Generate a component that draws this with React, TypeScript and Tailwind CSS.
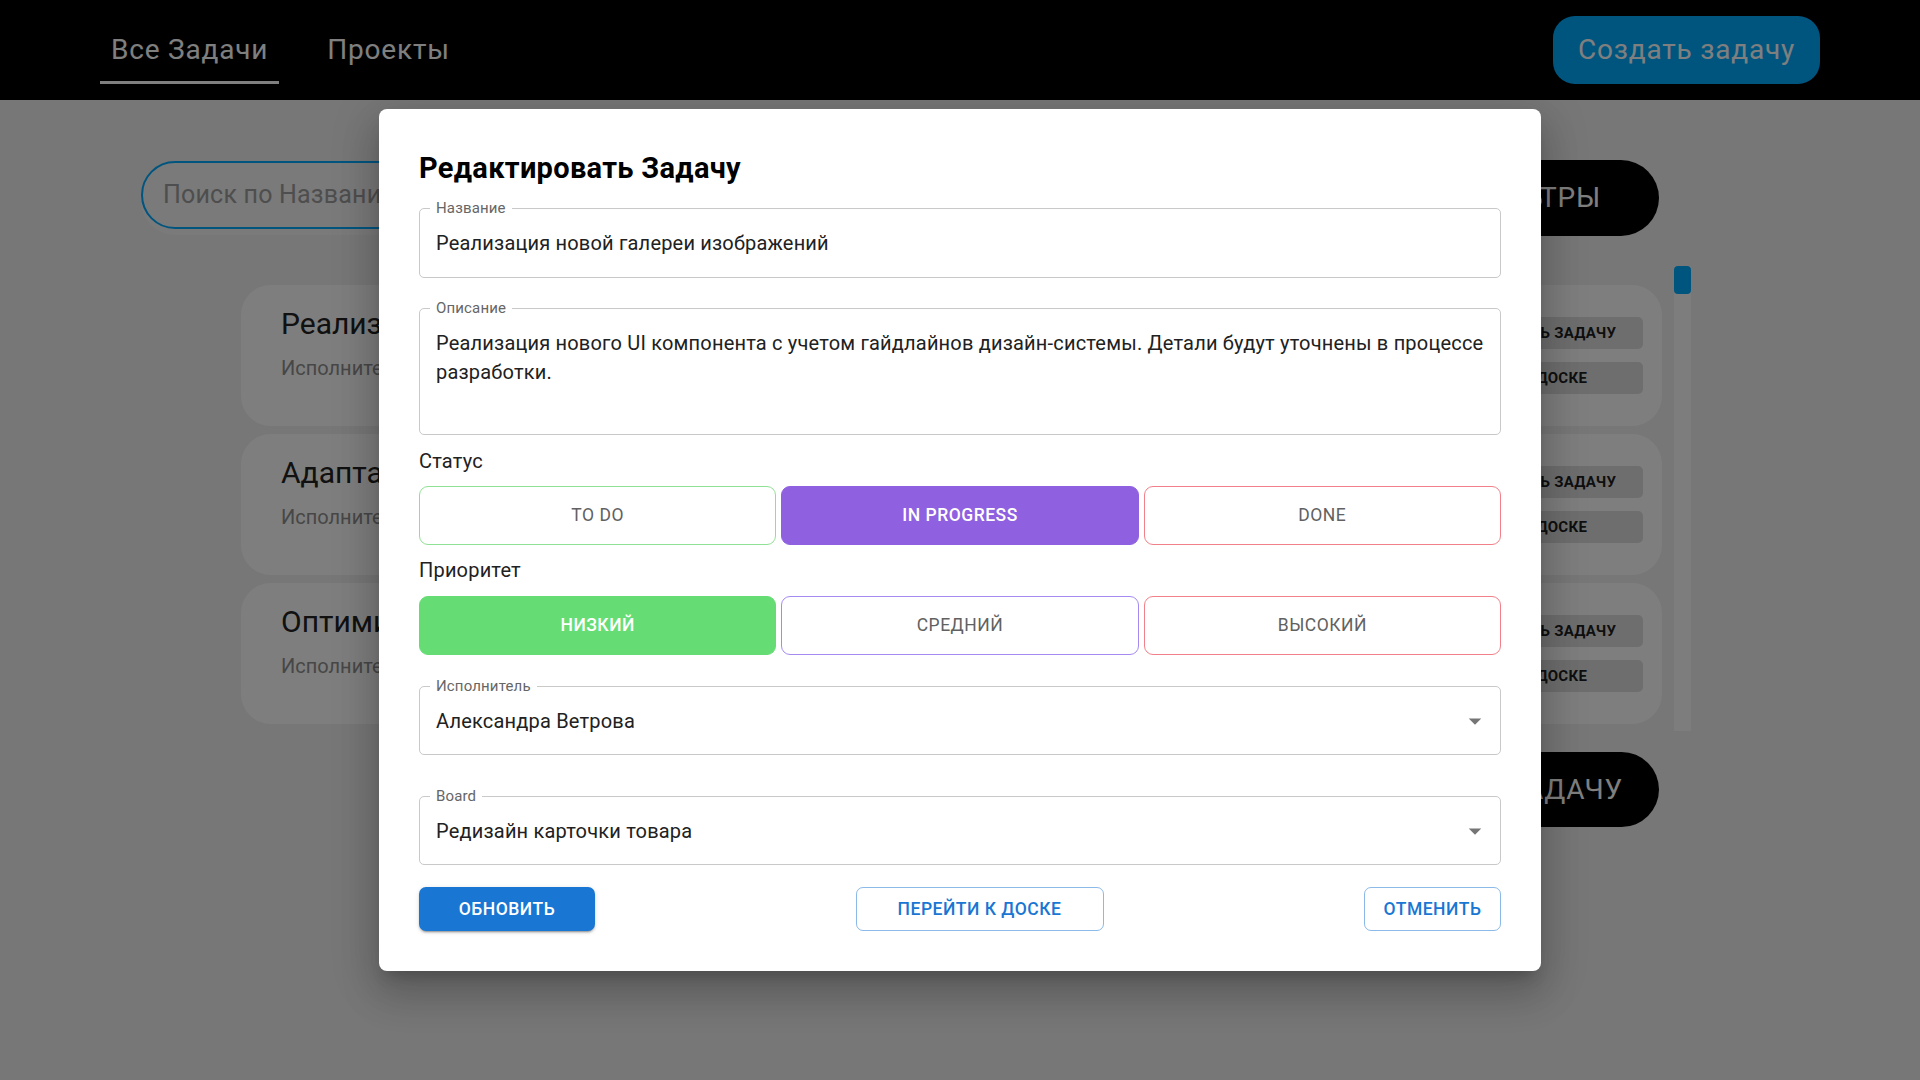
import React from "react";

const tasks = [
  { title: "Реализация новой галереи изображений", assignee: "Александра Ветрова" },
  { title: "Адаптация нового функционала для мобильных устройств", assignee: "Илья Романов" },
  { title: "Оптимизация загрузки страницы каталога", assignee: "Мария Кузнецова" },
];

const Field: React.FC<{ label: string; className?: string; children: React.ReactNode }> = ({
  label,
  className = "",
  children,
}) => (
  <div className={`relative rounded-[5px] border border-[#c9c9c9] ${className}`}>
    <span className="absolute -top-[11px] left-[10px] bg-white px-[6px] text-[15px] leading-[20px] tracking-[0.15px] text-[#666666]">
      {label}
    </span>
    {children}
  </div>
);

const SelectField: React.FC<{ label: string; value: string; className?: string }> = ({
  label,
  value,
  className = "",
}) => (
  <Field label={label} className={`flex h-[69px] items-center justify-between pl-4 pr-[10px] ${className}`}>
    <span className="text-[20px] tracking-[0.19px] text-[#212121]">{value}</span>
    <svg viewBox="0 0 24 24" className="h-[30px] w-[30px] fill-[#757575]">
      <path d="M7 10l5 5 5-5z" />
    </svg>
  </Field>
);

type Opt = { label: string; border: string; active?: string };

const Toggle: React.FC<{ options: Opt[]; className?: string }> = ({ options, className = "" }) => (
  <div className={`grid grid-cols-3 gap-[5px] ${className}`}>
    {options.map((o) => (
      <div
        key={o.label}
        className={`flex h-[59px] items-center justify-center rounded-[9px] border text-[17.5px] uppercase tracking-[0.5px] ${
          o.active ? `${o.active} font-medium text-white` : `${o.border} bg-white text-[#616161]`
        }`}
      >
        {o.label}
      </div>
    ))}
  </div>
);

export default function App() {
  return (
    <div className="relative h-screen w-full overflow-hidden bg-[#eeeeee] font-['Roboto',sans-serif]">
      {/* шапка */}
      <header className="flex h-[100px] items-start justify-between bg-black px-[100px]">
        <nav className="flex gap-[37px]">
          <div className="flex flex-col pt-[32px]">
            <span className="px-[11px] text-[28px] leading-[36px] tracking-[0.8px] text-white">Все Задачи</span>
            <div className="mt-[13px] h-[3px] bg-white" />
          </div>
          <div className="flex flex-col pt-[32px]">
            <span className="px-[11px] text-[28px] leading-[36px] tracking-[0.8px] text-white">Проекты</span>
          </div>
        </nav>
        <button className="mt-[16px] h-[68px] w-[267px] rounded-[22px] bg-[#00aaff] text-[28px] tracking-[0.8px] text-white">
          Создать задачу
        </button>
      </header>

      {/* список задач */}
      <main className="w-[1720px] pl-[141px] pt-[60px]">
        <div className="flex w-[1518px] items-start justify-between">
          <div className="mt-[1px] flex h-[68px] w-[1268px] items-center rounded-[34px] border-2 border-[#00aaff] bg-[#f4f4f4] pl-[20px] shadow-[0_6px_0_rgba(255,255,255,0.4)]">
            <span className="text-[25px] tracking-[0.2px] text-[#9c9c9c]">Поиск по Названию</span>
          </div>
          <button className="flex h-[76px] w-[240px] items-center justify-end rounded-[38px] bg-black pr-[58px] text-[28px] uppercase tracking-[0.8px] text-white">
            Фильтры
          </button>
        </div>

        <div className="mt-[30px] flex h-[465px] pl-[100px]">
          <div className="flex w-[1421px] shrink-0 flex-col gap-[8px] pt-[19px]">
            {tasks.map((t) => (
              <div
                key={t.title}
                className="flex h-[141px] shrink-0 items-center justify-between rounded-[30px] bg-[#fdfdfd] pl-[40px] pr-[19px]"
              >
                <div className="flex flex-col self-start pt-[21px]">
                  <span className="text-[30px] leading-[36px] text-[#222222]">{t.title}</span>
                  <span className="mt-[12px] text-[20px] leading-[28px] text-[#8e8e8e]">
                    Исполнитель: {t.assignee}
                  </span>
                </div>
                <div className="flex flex-col gap-[13px]">
                  <div className="flex h-[32px] w-[250px] items-center justify-center rounded-[5px] bg-[#dcdcdc] text-[15px] font-bold tracking-[0.3px] text-[#1e1e1e]">
                    РЕДАКТИРОВАТЬ ЗАДАЧУ
                  </div>
                  <div className="flex h-[32px] w-[250px] items-center justify-center rounded-[5px] bg-[#dcdcdc] text-[15px] font-bold tracking-[0.3px] text-[#1e1e1e]">
                    ПЕРЕЙТИ К ДОСКЕ
                  </div>
                </div>
              </div>
            ))}
          </div>
          <div className="ml-[12px] h-full w-[17px] shrink-0 bg-[#fafafa]">
            <div className="h-[28px] w-full rounded-[4px] bg-[#00aaff]" />
          </div>
        </div>

        <div className="mt-[21px] flex w-[1518px] justify-end">
          <button className="flex h-[75px] w-[340px] items-center justify-end rounded-[38px] bg-black pr-[36px] text-[28px] uppercase tracking-[0.8px] text-white">
            Создать задачу
          </button>
        </div>
      </main>

      {/* модальное окно */}
      <div className="absolute inset-0 flex items-center justify-center bg-black/50">
        <div className="flex w-[1162px] flex-col rounded-[8px] bg-white px-10 pb-[40px] pt-[41px] shadow-[0_11px_15px_-7px_rgba(0,0,0,0.2),0_24px_38px_3px_rgba(0,0,0,0.14),0_9px_46px_8px_rgba(0,0,0,0.12)]">
          <h2 className="text-[29px] font-bold leading-[37px] tracking-[0.3px] text-black">Редактировать Задачу</h2>

          <Field label="Название" className="mt-[21px] flex h-[70px] items-center px-4">
            <span className="text-[20px] tracking-[0.19px] text-[#212121]">Реализация новой галереи изображений</span>
          </Field>

          <Field label="Описание" className="mt-[30px] h-[127px] px-4 pt-[20px]">
            <p className="text-[20px] leading-[28.5px] tracking-[0.19px] text-[#212121]">
              Реализация нового UI компонента с учетом гайдлайнов дизайн-системы. Детали будут уточнены в процессе
              разработки.
            </p>
          </Field>

          <span className="mt-[11px] text-[20px] leading-[30px] tracking-[0.19px] text-[#212121]">Статус</span>
          <Toggle
            className="mt-[10px]"
            options={[
              { label: "To Do", border: "border-[#8fe293]" },
              { label: "In Progress", border: "border-[#a58af2]", active: "border-[#8f60e0] bg-[#8f60e0]" },
              { label: "Done", border: "border-[#f2808a]" },
            ]}
          />

          <span className="mt-[10px] text-[20px] leading-[30px] tracking-[0.19px] text-[#212121]">Приоритет</span>
          <Toggle
            className="mt-[11px]"
            options={[
              { label: "Низкий", border: "border-[#8fe293]", active: "border-[#66dd74] bg-[#66dd74]" },
              { label: "Средний", border: "border-[#a58af2]" },
              { label: "Высокий", border: "border-[#f2808a]" },
            ]}
          />

          <SelectField label="Исполнитель" value="Александра Ветрова" className="mt-[31px]" />
          <SelectField label="Board" value="Редизайн карточки товара" className="mt-[41px]" />

          <div className="mt-[22px] flex items-center justify-between">
            <button className="h-[44px] w-[176px] rounded-[7px] bg-[#1976d2] text-[17.5px] font-medium tracking-[0.5px] text-white shadow-[0_3px_1px_-2px_rgba(0,0,0,0.2),0_2px_2px_0_rgba(0,0,0,0.14),0_1px_5px_0_rgba(0,0,0,0.12)]">
              ОБНОВИТЬ
            </button>
            <button className="h-[44px] w-[248px] rounded-[7px] border border-[#1976d2]/50 text-[17.5px] font-medium tracking-[0.5px] text-[#1976d2]">
              ПЕРЕЙТИ К ДОСКЕ
            </button>
            <button className="h-[44px] w-[137px] rounded-[7px] border border-[#1976d2]/50 text-[17.5px] font-medium tracking-[0.5px] text-[#1976d2]">
              ОТМЕНИТЬ
            </button>
          </div>
        </div>
      </div>
    </div>
  );
}
